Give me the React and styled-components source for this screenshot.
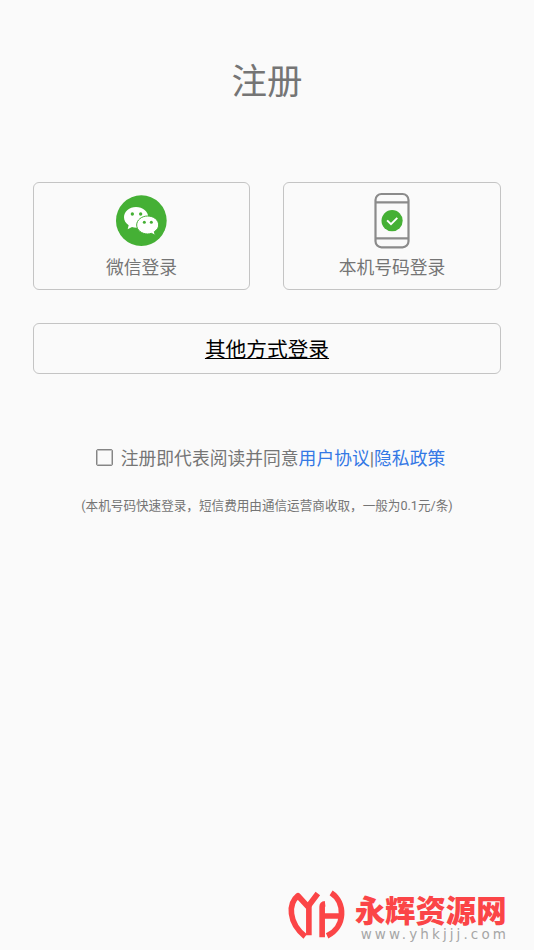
import React, { useState } from 'react';
import styled, { createGlobalStyle } from 'styled-components';

const GlobalStyle = createGlobalStyle`
  * {
    box-sizing: border-box;
  }

  body {
    margin: 0;
    background-color: #fafafa;
    color: #757575;
    font-family: Roboto, 'Noto Sans CJK SC', sans-serif;
  }
`;

const Page = styled.main`
  display: flex;
  flex-direction: column;
  height: 950px;
  padding: 57px 25px 6px 33px;
`;

const Content = styled.div`
  display: flex;
  flex-direction: column;
  width: 468px;
`;

const Title = styled.h1`
  margin: 0 0 75px;
  font-size: 35.5px;
  font-weight: 400;
  line-height: 50px;
  text-align: center;
`;

const CardRow = styled.div`
  display: grid;
  grid-template-columns: 217px 218px;
  justify-content: space-between;
  margin-bottom: 33px;
`;

const OutlineButton = styled.button`
  padding: 0;
  background: none;
  border: 1px solid #c4c4c4;
  border-radius: 6px;
  color: inherit;
  font-family: inherit;
  cursor: pointer;
`;

const LoginCard = styled(OutlineButton)`
  display: flex;
  flex-direction: column;
  align-items: center;
  height: 108px;
  padding-top: 9px;
  font-size: 17.8px;
  line-height: 26px;

  svg {
    display: block;
    margin-bottom: 5px;
  }
`;

const OtherButton = styled(OutlineButton)`
  height: 51px;
  padding-top: 2px;
  margin-bottom: 72px;
  color: #000;
  font-size: 20.7px;
  line-height: 30px;
  text-decoration: underline;
  text-decoration-thickness: 1px;
`;

const Agreement = styled.label`
  display: flex;
  justify-content: center;
  align-items: flex-start;
  padding-left: 7px;
  margin-bottom: 24px;
  font-size: 17.8px;
  line-height: 26px;
  white-space: nowrap;
`;

const Checkbox = styled.input`
  appearance: none;
  width: 17px;
  height: 17px;
  margin: 3px 8px 0 0;
  border: 1px solid #858585;
  border-radius: 2px;
  box-shadow: inset 0 0 0 1px #c2c2c2;

  &:checked {
    background-color: #45b035;
  }
`;

const Link = styled.a`
  color: #3478e5;
`;

const Hint = styled.p`
  margin: 0;
  font-size: 12.6px;
  line-height: 20px;
  text-align: center;
  white-space: nowrap;
`;

const Footer = styled.footer`
  display: flex;
  align-items: flex-start;
  align-self: flex-end;
  width: 227px;
  height: 59px;
  margin-top: auto;
`;

const Brand = styled.div`
  padding-top: 6px;
  margin-left: 3px;
  white-space: nowrap;
`;

const BrandName = styled.div`
  color: #fb4547;
  font-family: 'Noto Sans CJK SC', sans-serif;
  font-size: 30.4px;
  font-weight: 900;
  line-height: 36px;
`;

const BrandUrl = styled.div`
  padding-left: 6px;
  color: #a6a6a6;
  font-family: 'DejaVu Sans', sans-serif;
  font-size: 13.5px;
  letter-spacing: 3.1px;
  line-height: 15px;
`;

const WechatIcon = () => (
  <svg width="75" height="58" viewBox="-3 0 225 174">
    <circle cx="109" cy="86" r="76" fill="#45b035" />
    <path
      fill="#fff"
      d="M93 45c-20 0-36 13-36 31 0 10 5 18 14 24l-3 12 13-7c4 1 8 2 13 2 20 0 36-13 36-31S113 45 93 45z"
    />
    <path
      fill="#fff"
      stroke="#45b035"
      strokeWidth="3"
      d="M128 72c-18 0-33 12-33 27s15 27 33 27c4 0 8-1 11-2l12 6-3-11c8-5 13-12 13-20 0-15-15-27-33-27z"
    />
    <g fill="#45b035">
      <circle cx="82" cy="66" r="5" />
      <circle cx="107" cy="66" r="5" />
      <circle cx="118" cy="91" r="4.5" />
      <circle cx="139" cy="91" r="4.5" />
    </g>
  </svg>
);

const PhoneIcon = () => (
  <svg width="36" height="58" viewBox="0.5 0 36 58" fill="none">
    <g stroke="#8b8b8b" strokeWidth="2.2">
      <rect x="2" y="2" width="33" height="53.3" rx="6" />
      <path d="M2 10.4h33M2 46.3h33" />
    </g>
    <circle cx="18.6" cy="28.7" r="10.6" fill="#45b035" />
    <path d="M13.6 28.4l3.9 3.8 6.3-6.3" stroke="#fff" strokeWidth="1.9" />
  </svg>
);

const BrandLogo = () => (
  <svg width="70" height="60" viewBox="-2 -1 210 180" fill="none" stroke="#fb4547" strokeWidth="17">
    <path d="M68 154C16 112 17 54 46 31L76 64L106 24" strokeLinejoin="round" />
    <path d="M79 60V150M119 156V64Q119 56 128 55M119 92H178" />
    <path d="M146 22C190 50 190 126 134 152" />
  </svg>
);

const App = () => {
  const [agreed, setAgreed] = useState(false);

  return (
    <>
      <GlobalStyle />
      <Page>
        <Content>
          <Title>注册</Title>
          <CardRow>
            <LoginCard type="button">
              <WechatIcon />
              微信登录
            </LoginCard>
            <LoginCard type="button">
              <PhoneIcon />
              本机号码登录
            </LoginCard>
          </CardRow>
          <OtherButton type="button">其他方式登录</OtherButton>
          <Agreement>
            <Checkbox type="checkbox" checked={agreed} onChange={(e) => setAgreed(e.target.checked)} />
            <span>
              注册即代表阅读并同意<Link>用户协议</Link>|<Link>隐私政策</Link>
            </span>
          </Agreement>
          <Hint>(本机号码快速登录，短信费用由通信运营商收取，一般为0.1元/条)</Hint>
        </Content>
        <Footer>
          <BrandLogo />
          <Brand>
            <BrandName>永辉资源网</BrandName>
            <BrandUrl>www.yhkjjj.com</BrandUrl>
          </Brand>
        </Footer>
      </Page>
    </>
  );
};

export default App;
